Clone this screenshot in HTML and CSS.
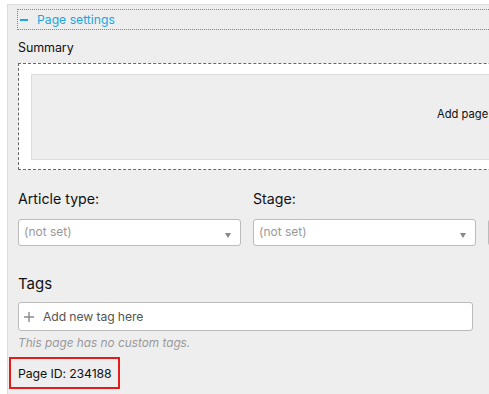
FILE: index.html
```html
<!DOCTYPE html>
<html>
<head>
<meta charset="utf-8">
<link rel="stylesheet" href="styles.css">
</head>
<body>
<div class="panel">
  <div class="section-head"><span class="minus"></span><span class="head-text">Page settings</span></div>
  <div class="label-sm summary-label">Summary</div>
  <div class="summary-box">
    <div class="summary-inner"><span class="summary-text">Add page</span></div>
  </div>
  <div class="fields">
    <div class="field">
      <div class="label-md">Article type:</div>
      <div class="select"><span class="select-text">(not set)</span><span class="arrow"></span></div>
    </div>
    <div class="field">
      <div class="label-md">Stage:</div>
      <div class="select"><span class="select-text">(not set)</span><span class="arrow"></span></div>
    </div>
    <div class="field">
      <div class="label-md">&nbsp;</div>
      <div class="select"></div>
    </div>
  </div>
  <div class="label-lg tags-label">Tags</div>
  <div class="tag-input">
    <svg class="plus" width="10" height="10" viewBox="0 0 10 10"><path d="M5 0V10M0 5H10" stroke="#8a8a8a" stroke-width="1.4"/></svg>
    <span class="tag-placeholder">Add new tag here</span>
  </div>
  <div class="no-tags">This page has no custom tags.</div>
  <div class="page-id">Page ID: 234188</div>
</div>
</body>
</html>
```

FILE: styles.css
```css
html, body {
  margin: 0;
  padding: 0;
  background: #fff;
  overflow: hidden;
  width: 489px;
  height: 394px;
}
body {
  font-family: Inter, "Noto Sans", sans-serif;
  color: #111;
}
.panel {
  margin: 4px 0 0 7px;
  width: 760px;
  height: 390px;
  box-sizing: border-box;
  background: #eeeeee;
  border-top: 1px solid #dcdcdc;
  border-left: 1px solid #dcdcdc;
  padding: 4px 0 0 10px;
}
.section-head {
  margin-left: -1px;
  height: 19px;
  border: 1px dotted #1ba6e2;
  display: flex;
  align-items: center;
  color: #1ba6e2;
  font-size: 12.2px;
}
.minus {
  width: 8px;
  height: 1.5px;
  background: #1ba6e2;
  margin: 1px 9px 0 2px;
}
.label-sm {
  font-size: 12.5px;
  letter-spacing: -0.1px;
  line-height: 16px;
}
.summary-label {
  margin-top: 10px;
}
.summary-box {
  margin-top: 7px;
  border: 1px dashed #666;
  background: #fff;
  padding: 10px 0 0 12px;
  box-sizing: border-box;
  height: 107px;
}
.summary-inner {
  height: 86px;
  box-sizing: border-box;
  background: #eeeeee;
  border: 1px solid #dddddd;
  padding: 31px 0 0 405px;
  font-size: 11.2px;
  line-height: 16px;
}
.summary-text {
  white-space: nowrap;
}
.fields {
  margin-top: 21px;
  display: flex;
  gap: 12px;
}
.field {
  width: 223px;
  flex: none;
}
.label-md {
  font-size: 14.2px;
  line-height: 16px;
}
.select {
  margin-top: 12px;
  height: 27px;
  box-sizing: border-box;
  background: #fff;
  border: 1px solid #bbbbbb;
  border-radius: 3px;
  display: flex;
  align-items: center;
  justify-content: space-between;
  padding: 0 9px 0 5px;
}
.select-text {
  color: #999;
  font-size: 12px;
  margin-top: -2px;
}
.arrow {
  width: 0;
  height: 0;
  border-left: 3px solid transparent;
  border-right: 3px solid transparent;
  border-top: 5px solid #888;
  margin-top: 5px;
}
.label-lg {
  font-size: 15px;
  line-height: 20px;
}
.tags-label {
  margin-top: 28px;
}
.tag-input {
  margin-top: 8px;
  width: 455px;
  height: 29px;
  box-sizing: border-box;
  background: #fff;
  border: 1px solid #bbbbbb;
  border-radius: 3px;
  display: flex;
  align-items: center;
  padding-left: 5px;
}
.plus {
  flex: none;
}
.tag-placeholder {
  margin-left: 9px;
  font-size: 12.2px;
  letter-spacing: -0.1px;
  color: #555;
}
.no-tags {
  margin-top: 4px;
  font-size: 11.8px;
  line-height: 16px;
  font-style: italic;
  color: #999;
}
.page-id {
  margin: 6px 0 0 -9px;
  width: 111px;
  height: 32px;
  box-sizing: border-box;
  border: 2px solid #e31b1b;
  padding-left: 7px;
  display: flex;
  align-items: center;
  white-space: nowrap;
  font-size: 12.3px;
  letter-spacing: -0.1px;
  color: #111;
}
```
